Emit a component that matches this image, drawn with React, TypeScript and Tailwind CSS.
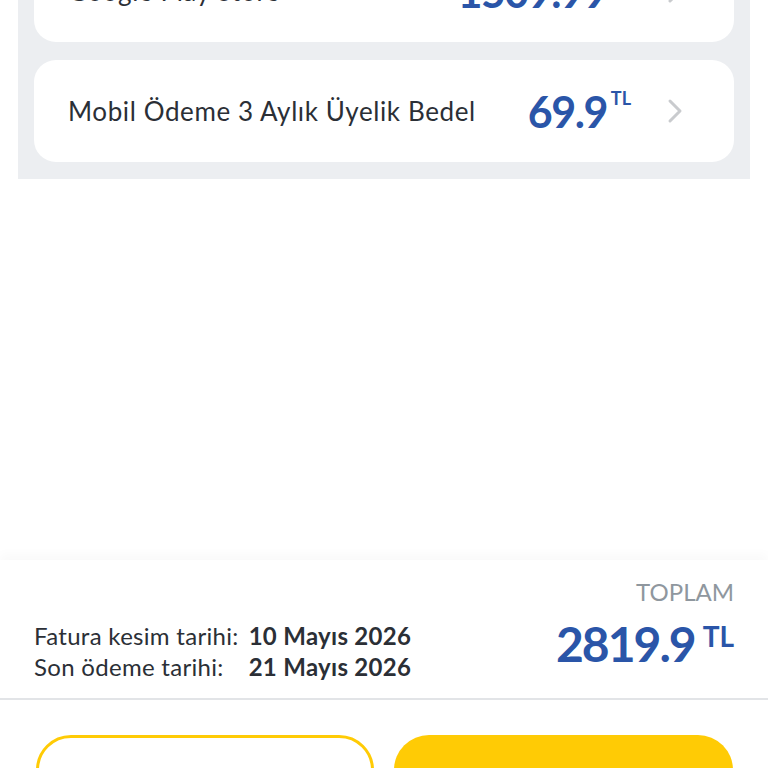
import { ReactNode } from "react"

const items = [
  { id: 1, title: "Google Play Store", price: "1509.99" },
  { id: 2, title: "Mobil Ödeme 3 Aylık Üyelik Bedel", price: "69.9" },
]

function Chevron() {
  return (
    <svg width="18" height="26" viewBox="0 0 18 26" fill="none">
      <polyline points="4,3 14,13 4,23" stroke="#c9cbce" strokeWidth="3" strokeLinecap="round" strokeLinejoin="round" />
    </svg>
  )
}

function Price({ children }: { children: ReactNode }) {
  return (
    <div className="flex items-start text-[#2a55a8]">
      <span className="text-[43px] font-bold leading-none tracking-[-1.5px]">{children}</span>
      <span className="ml-[4px] mt-[-1px] text-[18px] font-bold leading-none">TL</span>
    </div>
  )
}

export default function App() {
  return (
    <div className="flex h-[768px] w-full flex-col overflow-hidden bg-white text-[#2b2f36]" style={{ fontFamily: "Lato, 'Open Sans', sans-serif" }}>
      <div className="mx-[18px] mt-[-60px] flex flex-col gap-[18px] bg-[#eceef1] px-4 pb-[17px]">
        {items.map((item) => (
          <div key={item.id} className="flex h-[102px] items-center rounded-[22px] bg-white pl-[34px] pr-[50px]">
            <span className="flex-1 text-[26px] leading-none tracking-[0.6px]">{item.title}</span>
            <Price>{item.price}</Price>
            <div className="ml-[35px]">
              <Chevron />
            </div>
          </div>
        ))}
      </div>

      <div className="flex-1" />

      <div className="shrink-0 bg-white shadow-[0_-6px_10px_rgba(0,0,0,0.025)]">
        <div className="flex h-[138px] items-end justify-between px-[34px] pb-[16px]">
          <div className="grid grid-cols-[auto_auto] gap-x-[10px] text-[24px] leading-[31px] tracking-[0.3px]">
            <span>Fatura kesim tarihi:</span>
            <span className="font-bold">10 Mayıs 2026</span>
            <span>Son ödeme tarihi:</span>
            <span className="font-bold">21 Mayıs 2026</span>
          </div>
          <div className="flex flex-col items-end pb-[14px]">
            <span className="text-[24px] leading-none text-[#8f979e]">TOPLAM</span>
            <div className="mt-[16px] flex items-start text-[#2a55a8]">
              <span className="text-[48px] font-bold leading-none tracking-[-2px]">2819.9</span>
              <span className="ml-[8px] mt-[2px] text-[28px] font-bold leading-none">TL</span>
            </div>
          </div>
        </div>
        <div className="h-[2px] bg-[#e2e4e7]" />
        <div className="flex h-[68px] items-start gap-5 overflow-hidden pl-[36px] pr-[35px] pt-[35px]">
          <button className="h-[70px] w-[338px] shrink-0 rounded-[42px] border-[3px] border-[#ffcb05] bg-white" />
          <button className="h-[70px] w-[339px] shrink-0 rounded-[42px] bg-[#ffcb05]" />
        </div>
      </div>
    </div>
  )
}
